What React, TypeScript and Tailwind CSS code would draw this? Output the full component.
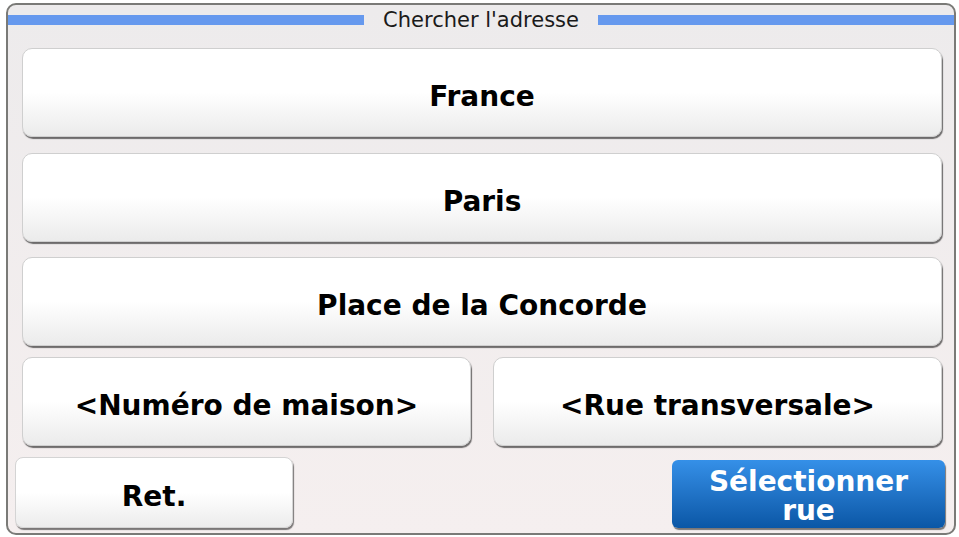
import React from "react";

const font = { fontFamily: '"DejaVu Sans", Verdana, sans-serif' };

const WideButton: React.FC<{ label: string; className?: string }> = ({ label, className = "" }) => (
  <button
    className={`h-[89px] w-full rounded-[10px] border border-[#cfcfcf] bg-gradient-to-b from-white via-white to-[#ebebeb] shadow-[1px_2px_1px_rgba(0,0,0,0.55)] pt-[8px] text-[28px] font-bold leading-none text-black ${className}`}
  >
    {label}
  </button>
);

export default function App() {
  return (
    <div className="w-[959px] h-[537px] bg-white pl-[6px] pt-[3px]" style={font}>
      <div className="w-[950px] h-[532px] border-2 border-[#7a7a77] rounded-[10px] bg-gradient-to-b from-[#edebec] to-[#f5efef] flex flex-col overflow-hidden">
        {/* Title bar */}
        <div className="h-[30px] flex items-center">
          <div className="flex-1 h-[10px] bg-[#6699ee]" />
          <div className="px-[19px] text-[21px] leading-none text-[#1a1a1a]">Chercher l'adresse</div>
          <div className="flex-1 h-[10px] bg-[#6699ee]" />
        </div>

        {/* Address fields */}
        <div className="pl-[14px] pr-[12px] mt-[13px] flex flex-col">
          <WideButton label="France" />
          <WideButton label="Paris" className="mt-[16px]" />
          <WideButton label="Place de la Concorde" className="mt-[15px]" />
          <div className="grid grid-cols-2 gap-[22px] mt-[11px]">
            <WideButton label="<Numéro de maison>" />
            <WideButton label="<Rue transversale>" />
          </div>
        </div>

        {/* Bottom actions */}
        <div className="mt-[11px] pl-[7px] pr-[9px] flex items-end justify-between">
          <button className="h-[71px] w-[278px] rounded-[8px] border border-[#d4d4d4] bg-gradient-to-b from-white via-white to-[#ececec] shadow-[1px_2px_1px_rgba(0,0,0,0.5)] pt-[8px] text-[28px] font-bold leading-none text-black">
            Ret.
          </button>
          <button className="h-[68px] w-[273px] rounded-[6px] bg-gradient-to-b from-[#3590e8] to-[#0a57a6] shadow-[1px_2px_1px_rgba(0,0,0,0.5)] pt-[4px] text-[28px] font-bold leading-[29px] text-white">
            Sélectionner
            <br />
            rue
          </button>
        </div>
      </div>
    </div>
  );
}
